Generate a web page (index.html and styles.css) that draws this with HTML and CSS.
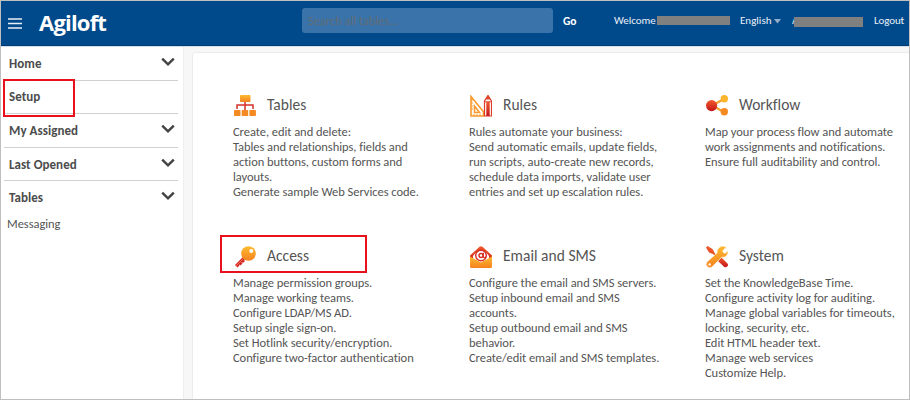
FILE: index.html
```html
<!DOCTYPE html>
<html lang="en">
<head>
<meta charset="utf-8">
<title>Agiloft Setup</title>
<link rel="stylesheet" href="styles.css">
</head>
<body>
<svg class="defs" width="0" height="0" aria-hidden="true">
  <defs>
    <linearGradient id="gold" x1="0" y1="0" x2="0" y2="1"><stop offset="0" stop-color="#fdbb30"/><stop offset="1" stop-color="#f58220"/></linearGradient>
    <linearGradient id="red" x1="0" y1="0" x2="0" y2="1"><stop offset="0" stop-color="#f0592a"/><stop offset="1" stop-color="#c4161c"/></linearGradient>
    <symbol id="chevron" viewBox="0 0 14 10"><path d="M1.2 1.7 7 7.3l5.800-5.600" fill="none" stroke="#444" stroke-width="2.500"/></symbol>
  </defs>
</svg>
<div class="app">
  <header class="topbar">
    <svg class="menu" viewBox="0 0 14 11"><path d="M0 1h14M0 5.500h14M0 10h14" stroke="#e8f0f7" stroke-width="1.500"/></svg>
    <div class="brand">Agiloft</div>
    <div class="search">Search all tables...</div>
    <div class="go">Go</div>
    <div class="welcome">Welcome</div>
    <div class="mask mask-user"></div>
    <div class="language">English</div>
    <svg class="caret" viewBox="0 0 7 5"><path d="M0 0h7L3.500 4.500z" fill="#93adca"/></svg>
    <div class="account">A</div>
    <div class="mask mask-account"></div>
    <div class="logout">Logout</div>
  </header>
  <div class="body">
    <nav class="sidebar">
      <div class="item"><span>Home</span><svg class="chev"><use href="#chevron"/></svg></div>
      <div class="item setup"><span>Setup</span><i class="outline outline-setup"></i></div>
      <div class="item"><span>My Assigned</span><svg class="chev"><use href="#chevron"/></svg></div>
      <div class="item"><span>Last Opened</span><svg class="chev"><use href="#chevron"/></svg></div>
      <div class="item last"><span>Tables</span><svg class="chev"><use href="#chevron"/></svg></div>
      <div class="subitem">Messaging</div>
    </nav>
    <main class="panel">
      <section class="tile">
        <h2><svg class="icon" viewBox="0 0 22 22"><rect x="6" y="0" width="10.500" height="7" rx=".7" fill="url(#gold)"/><path d="M11 7v8M3 14v-4h16v4" fill="none" stroke="#d5302a" stroke-width="1.500"/><g fill="#f58a22"><rect y="15" width="6.500" height="6" rx=".7"/><rect x="7.700" y="15" width="6.500" height="6" rx=".7"/><rect x="15.400" y="15" width="6.500" height="6" rx=".7"/></g></svg><span>Tables</span></h2>
        <p>Create, edit and delete:<br>Tables and relationships, fields and<br>action buttons, custom forms and<br>layouts.<br>Generate sample Web Services code.</p>
      </section>
      <section class="tile">
        <h2><svg class="icon" viewBox="0 0 22 22"><path d="M1 1.500V21h12.500v-4.200zM4.500 11v6.500h5z" fill="none" stroke="#f89b2d" stroke-width="1.600"/><path d="M1 5h2M1 8h2M1 11h2M1 14h2M4 21v-2M7 21v-2M10 21v-2" stroke="#f89b2d"/><path d="M14.500 21V6L18 .5 21.500 6v15z" fill="#fff" stroke="#dc3b26" stroke-width="1.200"/><path d="M15.500 4.500 18 .5l2.500 4z" fill="#df4528"/><path d="M16.300 7v14h3.400V7z" fill="url(#red)"/><path d="M14 6.800h8" stroke="#df4528"/></svg><span>Rules</span></h2>
        <p>Rules automate your business:<br>Send automatic emails, update fields,<br>run scripts, auto-create new records,<br>schedule data imports, validate user<br>entries and set up escalation rules.</p>
      </section>
      <section class="tile">
        <h2><svg class="icon" viewBox="0 0 22 22"><path d="M18 4 6 10.500l12 6.500" fill="none" stroke="#f8a02d" stroke-width="2.200"/><circle cx="5.600" cy="10.600" r="5.600" fill="url(#red)"/><circle cx="18.300" cy="3.800" r="3.700" fill="#fdb52e"/><circle cx="18.300" cy="16.800" r="3.700" fill="#f58a22"/></svg><span>Workflow</span></h2>
        <p>Map your process flow and automate<br>work assignments and notifications.<br>Ensure full auditability and control.</p>
      </section>
      <section class="tile">
        <i class="outline outline-access"></i>
        <h2><svg class="icon" viewBox="0 0 22 22"><path d="M10.500 11.500 2 20M8 14l2 2M5.500 16.500l2 2M2.500 18.500l2 2" fill="none" stroke="#d52b25" stroke-width="3"/><path d="M9.500 12.500 2 20" stroke="#f58a66" stroke-width=".7"/><circle cx="14.500" cy="7.500" r="7.300" fill="url(#gold)"/><circle cx="17.300" cy="5" r="2" fill="#fff"/></svg><span>Access</span></h2>
        <p>Manage permission groups.<br>Manage working teams.<br>Configure LDAP/MS AD.<br>Setup single sign-on.<br>Set Hotlink security/encryption.<br>Configure two-factor authentication</p>
      </section>
      <section class="tile">
        <h2><svg class="icon" viewBox="0 0 22 22"><path d="M0 9.500 9.500.7q1.500-1 3 0L22 9.500v3L11 20 0 12.500z" fill="url(#red)"/><path d="M3 10q8-11 16 0v4l-8 4-8-4z" fill="#fff"/><circle cx="11" cy="9.500" r="5.300" fill="none" stroke="#d72f26" stroke-width="1.400"/><circle cx="11" cy="9.500" r="2" fill="none" stroke="#d72f26" stroke-width="1.400"/><path d="M13.300 6.800v4q1 1.800 2.800 0" fill="none" stroke="#d72f26" stroke-width="1.300"/><path d="M0 10.500 11 16.500l11-6v10q0 1.500-1.500 1.500h-19Q0 22 0 20.500z" fill="url(#gold)"/></svg><span>Email and SMS</span></h2>
        <p>Configure the email and SMS servers.<br>Setup inbound email and SMS<br>accounts.<br>Setup outbound email and SMS<br>behavior.<br>Create/edit email and SMS templates.</p>
      </section>
      <section class="tile">
        <h2><svg class="icon" viewBox="0 0 22 22"><path d="M0 1.500 1.500 0l5 3L9 7.500l5 5-1.200 1.200-5.500-5.500L3 6.500z" fill="#ed542a"/><path d="m12 15 3.500-3.500 6 6q1.200 1.700-.3 3-1.500 1.500-3.200.3z" fill="url(#red)"/><path d="M20.300 1.200 16.700 4.800l.8 1.900 1.800.6 2.500-2.600q.8 3-1.400 5.200-2 2-4.700 1.300L6.500 20.500q-2.200 2.200-4.800.5-3-2.500-.5-5.200l10-9Q10.500 4.400 12.500 2 15.300-.8 19 .4z" fill="url(#gold)" stroke="#fff" stroke-width=".6"/><circle cx="3.600" cy="18.400" r="1.200" fill="#fff"/></svg><span>System</span></h2>
        <p>Set the KnowledgeBase Time.<br>Configure activity log for auditing.<br>Manage global variables for timeouts,<br>locking, security, etc.<br>Edit HTML header text.<br>Manage web services<br>Customize Help.</p>
      </section>
    </main>
  </div>
</div>
</body>
</html>
```
FILE: styles.css
```css
* { box-sizing: border-box; }
body { margin: 0; font-family: Carlito, Lato, sans-serif; color: #555; background: #fff; }
.defs { position: absolute; }
.app { width: 910px; height: 400px; border: 1px solid #bfbfbf; display: flex; flex-direction: column; overflow: hidden; }
.topbar { height: 45px; flex: none; background: #004a8b; border-bottom: 1px solid #003b78; display: flex; align-items: flex-start; color: #e9f0f7; font-size: 11px; line-height: 14px; white-space: nowrap; }
.menu { width: 14px; height: 11px; margin: 17px 0 0 7px; flex: none; }
.brand { font: bold 22px/30px "Open Sans", sans-serif; letter-spacing: -.8px; color: #fff; margin: 6px 0 0 17px; width: 263px; flex: none; }
.search { width: 251px; height: 25px; flex: none; margin-top: 7px; border-radius: 3px; background: #3973a9; color: #626c76; padding-left: 6px; font-size: 12.500px; line-height: 25px; letter-spacing: -.05px; }
.go { color: #fff; font-size: 11.500px; font-weight: bold; margin: 13px 0 0 10px; width: 51px; flex: none; }
.welcome { width: 43px; margin-top: 13px; letter-spacing: -.05px; flex: none; }
.mask { background: #808080; height: 9px; margin-top: 15px; flex: none; position: relative; }
.mask-user { width: 73px; }
.language { margin: 13px 0 0 10px; width: 34px; letter-spacing: 0; flex: none; }
.caret { width: 7px; height: 5px; margin-top: 18px; flex: none; }
.account { width: 8px; margin: 13px 0 0 11px; flex: none; }
.mask-account { width: 69px; height: 10px; margin: 16px 0 0 -6px; }
.logout { margin: 13px 0 0 11px; letter-spacing: -.1px; }
.body { flex: 1; display: flex; min-height: 0; background: #f7f7f7; border-top: 1px solid #d5dfe9; }
.sidebar { width: 183px; flex: none; background: #fff; border-right: 1px solid #eee; }
.item { height: 33.600px; margin: 0 5px 0 3px; padding: 0 3px 0 5px; border-bottom: 1px solid #d0d0d0; display: flex; align-items: center; justify-content: space-between; font-size: 13px; font-weight: bold; letter-spacing: .05px; color: #4c4c4c; position: relative; }
.item.last { border-bottom-color: transparent; }
.chev { width: 14px; height: 10px; margin-top: -3px; }
.subitem { font-size: 12.500px; letter-spacing: -.05px; line-height: 20px; padding-left: 6px; margin-top: -1px; }
.outline { position: absolute; border: 2px solid #e8101c; }
.outline-setup { left: -1px; top: -2px; width: 72px; height: 38px; z-index: 1; }
.panel { flex: 1; margin: 5px 0 0 8px; background: #fff; border: 1px solid #ececec; border-width: 1px 0 0 1px; border-radius: 4px 0 0 0; display: grid; grid-template-columns: 236px 236px 236px; grid-template-rows: 151px 151px; padding: 41px 0 0 40px; }
.tile { position: relative; white-space: nowrap; }
.tile h2 { margin: 0; height: 22px; display: flex; align-items: center; gap: 11px; font-size: 15.500px; font-weight: normal; letter-spacing: .02px; }
.tile h2 span { margin-top: -2px; }
.icon { width: 22px; height: 22px; flex: none; margin: 2px 0 0 1px; }
.tile p { margin: 8px 0 0; font-size: 12.500px; line-height: 15px; letter-spacing: -.05px; }
.outline-access { left: -13px; top: -10px; width: 147px; height: 38px; }
```
